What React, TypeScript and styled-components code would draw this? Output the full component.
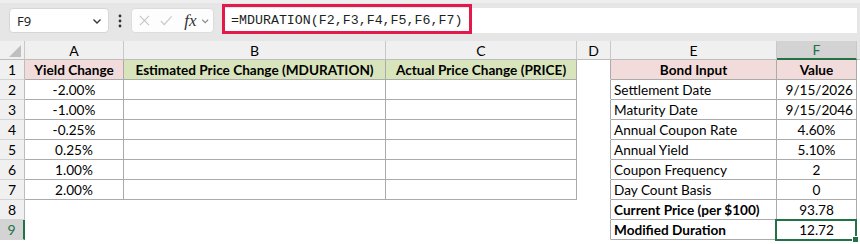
import styled, { createGlobalStyle } from "styled-components";

const GlobalStyle = createGlobalStyle`
  body {
    margin: 0;
    background: #ffffff;
  }
`;

const Frame = styled.div`
  width: 860px;
  height: 244px;
  overflow: hidden;
  background: #ffffff;
`;

const FormulaBar = styled.div`
  height: 41px;
  box-sizing: border-box;
  background: #e6e6e6;
  border-top: 3px solid #eeeeee;
  display: flex;
  align-items: flex-start;
  padding: 5px 3px 0 9px;
`;

const NameBox = styled.div`
  width: 100px;
  height: 25px;
  box-sizing: border-box;
  background: #ffffff;
  border: 1px solid #d6d6d6;
  border-radius: 4px;
  display: flex;
  align-items: center;
  justify-content: space-between;
  padding: 0 6px 0 7px;
  font-family: "Noto Sans", "Liberation Sans", sans-serif;
  font-size: 13px;
  color: #1f1f1f;
`;

const Dots = styled.div`
  width: 22px;
  height: 25px;
  display: flex;
  align-items: center;
  justify-content: center;
`;

const FxBox = styled.div`
  width: 83px;
  height: 25px;
  box-sizing: border-box;
  background: #fdfdfd;
  border: 1px solid #dcdcdc;
  border-radius: 4px;
  display: flex;
  align-items: center;
  gap: 10px;
  padding: 0 4px 0 7px;
`;

const FxLabel = styled.span`
  font-family: "Liberation Serif", serif;
  font-style: italic;
  font-size: 17px;
  color: #333333;
  margin-left: 2px;
  margin-right: -6px;
`;

const FormulaInput = styled.div`
  flex: 1;
  height: 25px;
  margin-left: 8px;
  position: relative;
  background: #ffffff;
  display: flex;
  align-items: center;
  padding-left: 9px;
  font-family: "Liberation Mono", monospace;
  font-size: 13.3px;
  color: #1f1f1f;
`;

const Callout = styled.div`
  position: absolute;
  left: 0;
  top: -4px;
  width: 250px;
  height: 30px;
  box-sizing: border-box;
  border: 3px solid #e3194b;
`;

const Sheet = styled.table`
  border-collapse: separate;
  border-spacing: 0;
  table-layout: fixed;
  width: 860px;
  font-family: Lato, "Liberation Sans", sans-serif;
  font-size: 13.6px;
  color: #000000;
`;

const ColHead = styled.th<{ $active?: boolean }>`
  height: 19px;
  box-sizing: border-box;
  padding: 0;
  font-weight: normal;
  font-size: 14px;
  text-align: center;
  background: ${p => (p.$active ? "#d3d3d3" : "#f0f0f0")};
  color: ${p => (p.$active ? "#217346" : "#000000")};
  border-right: 1px solid #c8c8c8;
  border-bottom: ${p => (p.$active ? "2px solid #217346" : "1px solid #bdbdbd")};
`;

const Corner = styled.th`
  height: 19px;
  box-sizing: border-box;
  padding: 0 3px 2px 0;
  background: #f0f0f0;
  border-right: 1px solid #c8c8c8;
  border-bottom: 1px solid #bdbdbd;
  text-align: right;
  vertical-align: bottom;
  line-height: 0;
`;

const Filler = styled.th`
  background: #e6e6e6;
  padding: 0;
  border-bottom: 1px solid #bdbdbd;
`;

const RowHead = styled.td<{ $active?: boolean }>`
  height: 20px;
  box-sizing: border-box;
  padding: 0;
  font-size: 14px;
  text-align: center;
  background: ${p => (p.$active ? "#d3d3d3" : "#f0f0f0")};
  color: ${p => (p.$active ? "#217346" : "#000000")};
  border-right: ${p => (p.$active ? "2px solid #217346" : "1px solid #bdbdbd")};
  border-bottom: 1px solid #d4d4d4;
`;

type CellProps = {
  $fill?: string;
  $bold?: boolean;
  $align?: "left" | "center" | "right";
  $r?: boolean;
  $b?: boolean;
  $selected?: boolean;
};

const Cell = styled.td<CellProps>`
  height: 20px;
  box-sizing: border-box;
  padding: 1px 3px 0;
  white-space: nowrap;
  overflow: visible;
  position: relative;
  background: ${p => p.$fill || "#ffffff"};
  font-weight: ${p => (p.$bold ? 700 : 400)};
  text-align: ${p => p.$align || "left"};
  border-right: 1px solid ${p => (p.$r ? "#ababab" : "transparent")};
  border-bottom: 1px solid ${p => (p.$b ? "#ababab" : "transparent")};

  ${p =>
    p.$selected &&
    `
    &::after {
      content: "";
      position: absolute;
      left: -2px;
      top: -1px;
      right: -1px;
      bottom: -2px;
      border: 2px solid #217346;
    }
    &::before {
      content: "";
      position: absolute;
      right: -3px;
      bottom: -4px;
      width: 5px;
      height: 5px;
      background: #217346;
      border: 1px solid #ffffff;
      z-index: 1;
    }
  `}
`;

const PINK = "#f2dcdb";
const GREEN = "#d8e4bc";

const yieldChanges = ["-2.00%", "-1.00%", "-0.25%", "0.25%", "1.00%", "2.00%"];

const bondRows: { label: string; value: string; align: "center" | "right"; bold?: boolean }[] = [
  { label: "Settlement Date", value: "9/15/2026", align: "right" },
  { label: "Maturity Date", value: "9/15/2046", align: "right" },
  { label: "Annual Coupon Rate", value: "4.60%", align: "center" },
  { label: "Annual Yield", value: "5.10%", align: "center" },
  { label: "Coupon Frequency", value: "2", align: "center" },
  { label: "Day Count Basis", value: "0", align: "center" },
  { label: "Current Price (per $100)", value: "93.78", align: "center", bold: true },
  { label: "Modified Duration", value: "12.72", align: "center", bold: true },
];

const Chevron = ({ color = "#333" }: { color?: string }) => (
  <svg width="10" height="10" viewBox="0 0 10 10">
    <polyline points="1.5,3.5 5,7 8.5,3.5" fill="none" stroke={color} strokeWidth="1.3" />
  </svg>
);

export default function App() {
  return (
    <Frame>
      <GlobalStyle />
      <FormulaBar>
        <NameBox>
          <span>F9</span>
          <Chevron />
        </NameBox>
        <Dots>
          <svg width="4" height="14" viewBox="0 0 4 14">
            <circle cx="2" cy="2" r="1.4" fill="#333" />
            <circle cx="2" cy="7" r="1.4" fill="#333" />
            <circle cx="2" cy="12" r="1.4" fill="#333" />
          </svg>
        </Dots>
        <FxBox>
          <svg width="13" height="13" viewBox="0 0 13 13">
            <path d="M1 1 L12 12 M12 1 L1 12" stroke="#c4c4c4" strokeWidth="1.3" />
          </svg>
          <svg width="15" height="13" viewBox="0 0 15 13">
            <polyline points="1,7 5,11.5 14,1.5" fill="none" stroke="#c4c4c4" strokeWidth="1.3" />
          </svg>
          <FxLabel>fx</FxLabel>
          <Chevron color="#8a8a8a" />
        </FxBox>
        <FormulaInput>
          =MDURATION(F2,F3,F4,F5,F6,F7)
          <Callout />
        </FormulaInput>
      </FormulaBar>

      <Sheet>
        <colgroup>
          <col style={{ width: 25 }} />
          <col style={{ width: 99 }} />
          <col style={{ width: 262 }} />
          <col style={{ width: 191 }} />
          <col style={{ width: 34 }} />
          <col style={{ width: 166 }} />
          <col style={{ width: 80 }} />
          <col />
        </colgroup>
        <thead>
          <tr>
            <Corner>
              <svg width="12" height="12" viewBox="0 0 12 12">
                <polygon points="12,0 12,12 0,12" fill="#bfbfbf" />
              </svg>
            </Corner>
            {["A", "B", "C", "D", "E"].map(c => (
              <ColHead key={c}>{c}</ColHead>
            ))}
            <ColHead $active>F</ColHead>
            <Filler />
          </tr>
        </thead>
        <tbody>
          <tr>
            <RowHead>1</RowHead>
            <Cell $fill={PINK} $bold $align="center" $r $b>Yield Change</Cell>
            <Cell $fill={GREEN} $bold $align="center" $r $b>Estimated Price Change (MDURATION)</Cell>
            <Cell $fill={GREEN} $bold $align="center" $r $b>Actual Price Change (PRICE)</Cell>
            <Cell $r />
            <Cell $fill={PINK} $bold $align="center" $r $b>Bond Input</Cell>
            <Cell $fill={PINK} $bold $align="center" $r $b>Value</Cell>
            <Cell />
          </tr>
          {bondRows.map((row, i) => {
            const n = i + 2;
            const inTable = i < yieldChanges.length;
            return (
              <tr key={n}>
                <RowHead $active={n === 9}>{n}</RowHead>
                <Cell $align="center" $r={inTable} $b={inTable}>{inTable ? yieldChanges[i] : ""}</Cell>
                <Cell $r={inTable} $b={inTable} />
                <Cell $r={inTable} $b={inTable} />
                <Cell $r />
                <Cell $bold={row.bold} $r $b>{row.label}</Cell>
                <Cell $align={row.align} $r $b $selected={n === 9}>{row.value}</Cell>
                <Cell />
              </tr>
            );
          })}
        </tbody>
      </Sheet>
    </Frame>
  );
}
